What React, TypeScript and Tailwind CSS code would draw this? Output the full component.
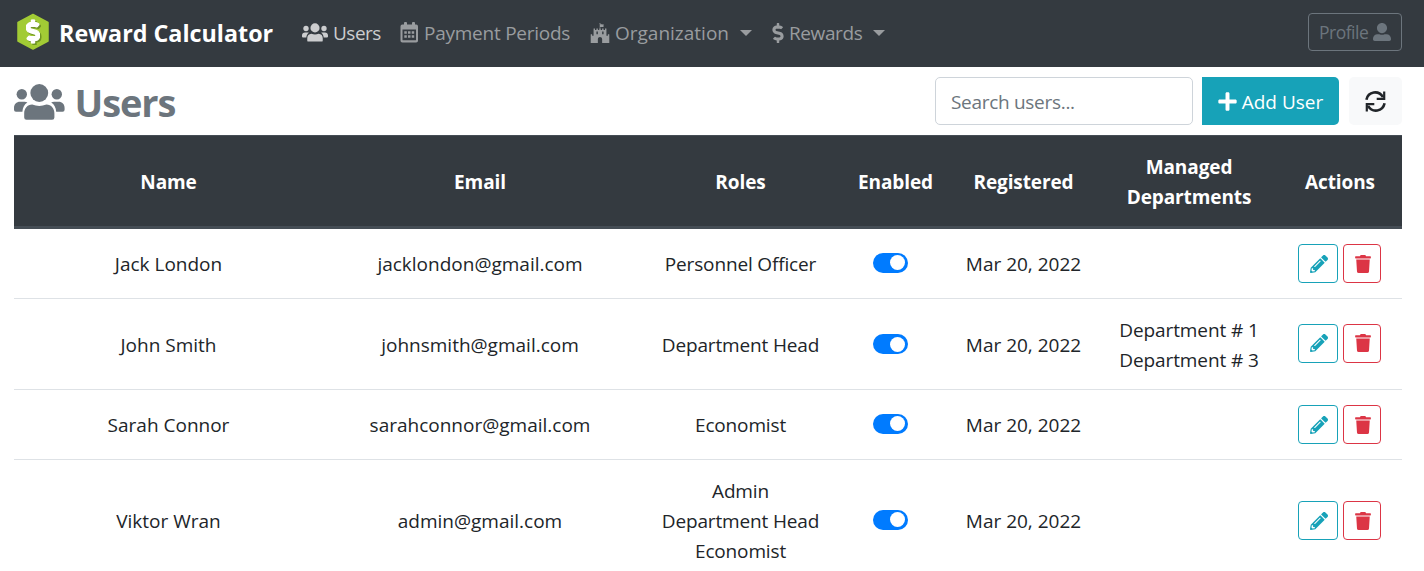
import React from "react";
import { FaFortAwesome, FaDollarSign, FaUserAlt, FaPlus, FaPencilAlt, FaTrash } from "react-icons/fa";

type User = {
  name: string;
  email: string;
  roles: string[];
  departments: string[];
  height: string;
  nudge?: string;
};

const users: User[] = [
  { name: "Jack London", email: "jacklondon@gmail.com", roles: ["Personnel Officer"], departments: [], height: "h-[70px]" },
  { name: "John Smith", email: "johnsmith@gmail.com", roles: ["Department Head"], departments: ["Department # 1", "Department # 3"], height: "h-[91px]", nudge: "pt-0.5" },
  { name: "Sarah Connor", email: "sarahconnor@gmail.com", roles: ["Economist"], departments: [], height: "h-[70px]" },
  { name: "Viktor Wran", email: "admin@gmail.com", roles: ["Admin", "Department Head", "Economist"], departments: [], height: "h-[122px]" },
];

const columns = "grid grid-cols-[309px_314px_207px_103px_153px_178px_124px] items-center text-center";

function Caret() {
  return <span className="ml-[11px] border-x-6 border-t-6 border-x-transparent border-t-current" />;
}

function Logo() {
  return (
    <svg viewBox="0 0 34 38" className="h-[38px] w-[34px]">
      <path d="M17 1.500 32 9.500v18.500L17 36 2 28V9.500z" fill="#a2cb35" stroke="#a2cb35" strokeWidth="1.500" strokeLinejoin="round" />
      <FaDollarSign x="11.500" y="8" className="h-6 w-[14px]" color="#6f9424" stroke="#6f9424" strokeWidth="30" />
      <FaDollarSign x="10" y="6.500" className="h-6 w-[14px]" color="#ffffff" stroke="#ffffff" strokeWidth="30" />
    </svg>
  );
}

function UsersIcon({ className }: { className: string }) {
  const side = "M0 25.800V24c0-3.800 2.400-6.200 6-6.200h4.500c1.100 0 2 .2 2.900.6-3 1.900-4.700 4.800-5 9.300H2q-2 0-2-1.900z";
  return (
    <svg viewBox="0 0 50.600 36" fill="currentColor" className={className}>
      <circle cx="25.300" cy="9" r="8.900" />
      <circle cx="7.800" cy="10.200" r="5.200" />
      <circle cx="42.800" cy="10.200" r="5.200" />
      <path d={side} />
      <path d={side} transform="translate(50.6 0) scale(-1 1)" />
      <path d="M10.200 33.400v-4c0-5 3-8.700 8-8.900q7.100 2.800 14.200 0c5 .2 8 3.900 8 8.900v4q0 2.300-2.300 2.300H12.500q-2.300 0-2.300-2.300z" />
    </svg>
  );
}

function CalendarIcon({ className }: { className: string }) {
  return (
    <svg viewBox="0 0 19 21" fill="currentColor" className={className}>
      <path fillRule="evenodd" d="M4 1q0-1 1-1h1q1 0 1 1v1.600h5V1q0-1 1-1h1q1 0 1 1v1.600h1.200q1.800 0 1.800 1.800v14.300q0 1.800-1.800 1.800H2.300q-1.800 0-1.800-1.800V4.400q0-1.800 1.800-1.800H4zM2.500 7.500v10.200q0 .6.6.6h12.300q.6 0 .6-.6V7.500z" />
      <path d="M4.300 9.300h2.500v2.500H4.300zM8 9.300h2.500v2.500H8zM11.700 9.300h2.500v2.500h-2.500zM4.300 13.200h2.500v2.500H4.300zM8 13.200h2.500v2.500H8zM11.700 13.200h2.500v2.500h-2.500z" />
    </svg>
  );
}

function RefreshIcon({ className }: { className: string }) {
  return (
    <svg viewBox="0 0 21 21" fill="none" stroke="currentColor" strokeWidth="2.600" className={className}>
      <path d="M1.400 8.700C3.200.4 13.500-1.300 18 6.200" />
      <path d="M19.200.500v7.400h-7.500" strokeWidth="2.200" />
      <path d="M19.600 12.300C17.800 20.600 7.500 22.300 3 14.800" />
      <path d="M1.800 20.500v-7.400h7.500" strokeWidth="2.200" />
    </svg>
  );
}

export default function App() {
  return (
    <div className="h-[571px] overflow-hidden bg-white font-['Open_Sans','Noto_Sans',sans-serif] text-[19px] leading-[30px] text-[#212529]">
      <nav className="flex h-[67px] items-center bg-[#343a40] pr-[22px] pb-[3px] pl-4 text-[#999c9f]">
        <Logo />
        <span className="ml-[9px] w-[243px] pt-0.5 text-[23.3px] font-bold whitespace-nowrap text-white">Reward Calculator</span>
        <span className="flex w-[98px] items-center pt-px tracking-[-0.5px] text-[#cccdcf]">
          <UsersIcon className="mr-[5px] h-[19px] w-[26px] shrink-0" />Users
        </span>
        <span className="flex w-[190px] items-center pt-px tracking-[-0.25px] whitespace-nowrap">
          <CalendarIcon className="mr-[5px] h-[21px] w-[19px] shrink-0" />Payment Periods
        </span>
        <span className="flex w-[182px] items-center pt-px">
          <FaFortAwesome className="mr-[5px] size-5 shrink-0" />Organization<Caret />
        </span>
        <span className="flex items-center pt-px tracking-[-0.4px]">
          <FaDollarSign className="mr-[5px] h-5 w-3 shrink-0" />Rewards<Caret />
        </span>
        <button className="ml-auto flex h-[38px] w-[94px] items-center rounded-[4px] border border-[#6c757d] px-[10px] text-[17.5px] tracking-[-0.5px] text-[#6c757d]">
          Profile<FaUserAlt className="ml-auto size-[18px] shrink-0" />
        </button>
      </nav>
      <main className="pr-[22px] pl-[14px]">
        <header className="flex h-[68px] items-center text-[#6c757d]">
          <UsersIcon className="mt-0.5 h-9 w-[50.6px]" />
          <h1 className="mt-0.5 ml-[10px] text-[38px] font-bold tracking-[-1.1px]">Users</h1>
          <input placeholder="Search users..." className="ml-auto h-12 w-[258px] rounded-[5px] border border-[#ced4da] px-[15px] pt-0.5 tracking-[-0.3px] placeholder:text-[#6c757d]" />
          <button className="ml-[9px] flex h-12 w-[137px] items-center justify-center rounded-r-[5px] bg-[#17a2b8] text-white">
            <FaPlus className="mr-[5px] h-[21px] w-[19px] shrink-0" /><span className="pt-0.5">Add User</span>
          </button>
          <button className="ml-[10px] flex h-12 w-[53px] items-center justify-center rounded-[5px] bg-[#f8f9fa] text-[#212529]">
            <RefreshIcon className="size-[21px]" />
          </button>
        </header>
        <div className={`${columns} h-[94px] border-t border-b-3 border-t-[#454d55] border-b-[#454d55] bg-[#343a40] pt-0.5 font-bold tracking-[-0.1px] text-white`}>
          <span>Name</span>
          <span>Email</span>
          <span>Roles</span>
          <span>Enabled</span>
          <span>Registered</span>
          <span>Managed<br />Departments</span>
          <span>Actions</span>
        </div>
        {users.map((u) => (
          <div key={u.name} className={`${columns} ${u.height} border-b border-[#dee2e6]`}>
            <span className={u.nudge}>{u.name}</span>
            <span className={u.nudge}>{u.email}</span>
            <span className={`${u.nudge ?? ""} tracking-[-0.15px]`}>
              {u.roles.map((r) => <span key={r} className="block">{r}</span>)}
            </span>
            <span className={`flex justify-center pr-[10px] ${u.nudge ? "" : "pb-[2px]"}`}>
              <span className="flex h-5 w-[35px] items-center justify-end rounded-full bg-[#007bff] pr-[3px]">
                <span className="size-[15px] rounded-full bg-white" />
              </span>
            </span>
            <span className={u.nudge}>Mar 20, 2022</span>
            <span className={`${u.nudge ?? ""} tracking-[-0.1px]`}>
              {u.departments.map((d) => <span key={d} className="block">{d}</span>)}
            </span>
            <span className={`flex justify-center gap-[5px] pr-[2px] ${u.nudge ? "pb-0.5" : ""}`}>
              <button className="flex h-[39px] w-10 items-center justify-center rounded-[4px] border border-[#17a2b8] pl-0.5 text-[#17a2b8]">
                <FaPencilAlt className="size-[18px]" />
              </button>
              <button className="flex h-[39px] w-[38px] items-center justify-center rounded-[4px] border border-[#dc3545] pl-0.5 text-[#dc3545]">
                <FaTrash className="size-[18px]" />
              </button>
            </span>
          </div>
        ))}
      </main>
    </div>
  );
}
